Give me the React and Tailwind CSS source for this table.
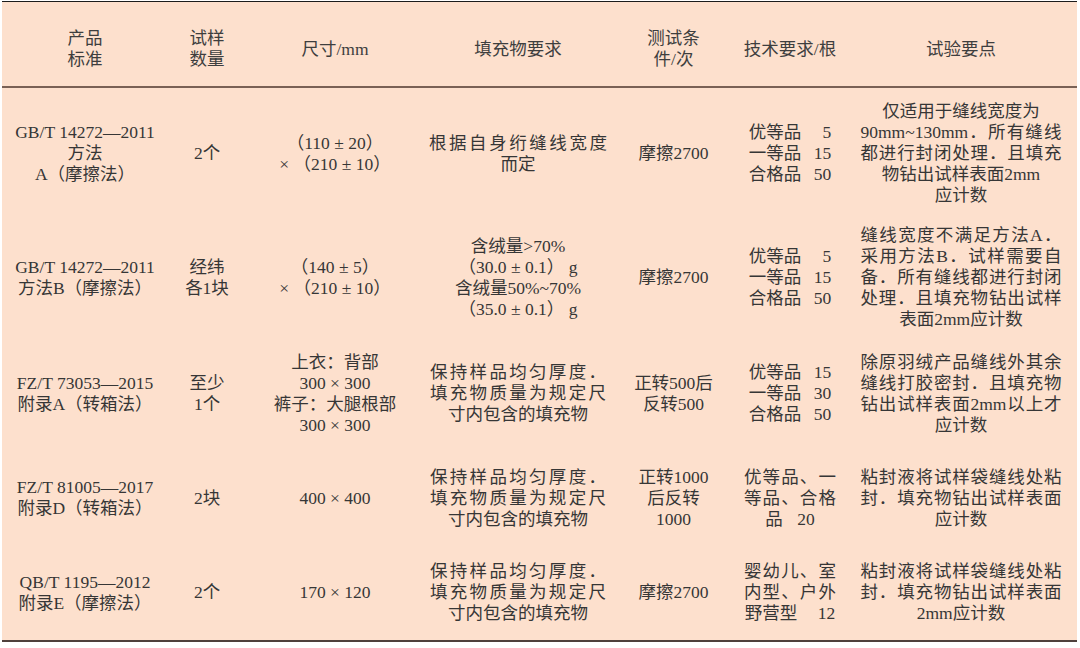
const FONT = { fontFamily: '"Liberation Serif", "Noto Sans CJK SC", serif' }

// a line is a string, or { t, w } for a line spread out to width w
function Line({ line }) {
    if (typeof line === "string") return <div className="whitespace-pre">{line}</div>
    if (line.w)
        return (
            <div className="mx-auto whitespace-pre [text-align-last:justify]" style={{ width: line.w }}>
                {line.t}
            </div>
        )
    return <div className="flex justify-center">{line.node}</div>
}

function Cell({ lines }) {
    return (
        <div className="flex flex-col items-stretch justify-center text-center">
            {lines.map((l, i) => (
                <Line key={i} line={l} />
            ))}
        </div>
    )
}

function Grade({ label, n, w = "w-[30px]" }) {
    return {
        node: (
            <>
                <span>{label}</span>
                <span className={`${w} text-right`}>{n}</span>
            </>
        ),
    }
}

// full-width lines of the last column
const J = (t) => ({ t, w: 201 })

const FILL = [
    { t: "保持样品均匀厚度．", w: 176 },
    { t: "填充物质量为规定尺", w: 176 },
    "寸内包含的填充物",
]

const ROWS = [
    {
        h: "h-[131px]",
        cells: [
            ["GB/T 14272—2011", "方法", "A（摩擦法）"],
            ["2个"],
            ["（110 ± 20）", "× （210 ± 10）"],
            [{ t: "根据自身绗缝线宽度", w: 178 }, "而定"],
            ["摩擦2700"],
            [Grade({ label: "优等品", n: "5" }), Grade({ label: "一等品", n: "15" }), Grade({ label: "合格品", n: "50" })],
            ["仅适用于缝线宽度为", J("90mm~130mm．所有缝线"), J("都进行封闭处理．且填充"), "物钻出试样表面2mm", "应计数"],
        ],
    },
    {
        h: "h-[117px]",
        cells: [
            ["GB/T 14272—2011", "方法B（摩擦法）"],
            ["经纬", "各1块"],
            ["（140 ± 5）", "× （210 ± 10）"],
            ["含绒量>70%", "（30.0 ± 0.1） g", "含绒量50%~70%", "（35.0 ± 0.1） g"],
            ["摩擦2700"],
            [Grade({ label: "优等品", n: "5" }), Grade({ label: "一等品", n: "15" }), Grade({ label: "合格品", n: "50" })],
            [J("缝线宽度不满足方法A．"), J("采用方法B．试样需要自"), J("备．所有缝线都进行封闭"), J("处理．且填充物钻出试样"), "表面2mm应计数"],
        ],
    },
    {
        h: "h-[115px]",
        cells: [
            ["FZ/T 73053—2015", "附录A（转箱法）"],
            ["至少", "1个"],
            ["上衣：背部", "300 × 300", "裤子：大腿根部", "300 × 300"],
            FILL,
            ["正转500后", "反转500"],
            [Grade({ label: "优等品", n: "15" }), Grade({ label: "一等品", n: "30" }), Grade({ label: "合格品", n: "50" })],
            [J("除原羽绒产品缝线外其余"), J("缝线打胶密封．且填充物"), J("钻出试样表面2mm以上才"), "应计数"],
        ],
    },
    {
        h: "h-[94px]",
        cells: [
            ["FZ/T 81005—2017", "附录D（转箱法）"],
            ["2块"],
            ["400 × 400"],
            FILL,
            ["正转1000", "后反转", "1000"],
            [{ t: "优等品、一", w: 92 }, { t: "等品、合格", w: 92 }, Grade({ label: "品", n: "20", w: "w-[32px]" })],
            [J("粘封液将试样袋缝线处粘"), J("封．填充物钻出试样表面"), "应计数"],
        ],
    },
    {
        h: "h-[95px]",
        cells: [
            ["QB/T 1195—2012", "附录E（摩擦法）"],
            ["2个"],
            ["170 × 120"],
            FILL,
            ["摩擦2700"],
            [{ t: "婴幼儿、室", w: 92 }, { t: "内型、户外", w: 92 }, Grade({ label: "野营型", n: "12", w: "w-[38px]" })],
            [J("粘封液将试样袋缝线处粘"), J("封．填充物钻出试样表面"), "2mm应计数"],
        ],
    },
]

const HEAD = [["产品", "标准"], ["试样", "数量"], ["尺寸/mm"], ["填充物要求"], ["测试条", "件/次"], ["技术要求/根"], ["试验要点"]]

const COLS = "grid grid-cols-[166px_78px_178px_188px_123px_110px_232px]"

export default function App() {
    return (
        <div className="w-[1080px] h-[648px] bg-white pt-px" style={FONT}>
            <div className="ml-[2px] w-[1075px] bg-[#fde0cd] border-t border-[#1c1c1c] border-b-2 border-b-[#4f403c] text-[17.5px] leading-[21px] text-[#363636]">
                {/* Header */}
                <div className={`${COLS} h-[86px] items-center border-b-2 border-[#7a6155] text-[#3e3e3e] pt-[10px]`}>
                    {HEAD.map((c, i) => (
                        <Cell key={i} lines={c} />
                    ))}
                </div>

                {ROWS.map((row, r) => (
                    <div key={r} className={`${COLS} ${row.h} items-center`}>
                        {row.cells.map((c, i) => (
                            <Cell key={i} lines={c} />
                        ))}
                    </div>
                ))}
            </div>
        </div>
    )
}
